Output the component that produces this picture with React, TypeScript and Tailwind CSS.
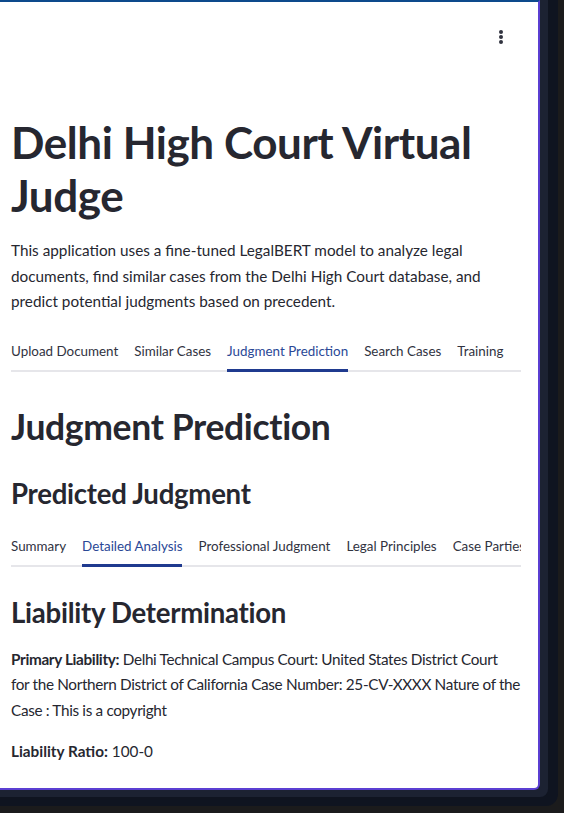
import React from "react";

const TOP_TABS = ["Upload Document", "Similar Cases", "Judgment Prediction", "Search Cases", "Training"];
const SUB_TABS = ["Summary", "Detailed Analysis", "Professional Judgment", "Legal Principles", "Case Parties"];

function Tabs({ items, active }: { items: string[]; active: string }) {
  return (
    <div className="relative flex gap-4 overflow-hidden whitespace-nowrap">
      <div className="absolute inset-x-0 bottom-0 h-[2px] bg-[#e6e6ea]" />
      {items.map((t) => (
        <div
          key={t}
          className={
            "relative pb-[11px] pt-1 text-[13.4px] leading-[20px] " +
            (t === active ? "text-[#2a4896]" : "text-[#31333f]")
          }
        >
          {t}
          {t === active && <div className="absolute inset-x-0 bottom-0 h-[3px] bg-[#1f3a8f]" />}
        </div>
      ))}
    </div>
  );
}

export default function App() {
  return (
    <div className="h-[813px] w-full overflow-hidden bg-[#1b1b1c] font-['Lato','Liberation_Sans',sans-serif]">
      <div className="h-[806px] w-[558px] rounded-br-xl bg-[#0f1420]">
        <div className="h-[797px] w-[548px] rounded-br-lg bg-[#1c2232]">
          <div className="relative h-[790px] w-[540px] overflow-hidden rounded-br-md border-b-2 border-r-2 border-t-2 border-b-[#5b3fd2] border-r-[#5b3fd2] border-t-[#0d4a8c] bg-white text-[#262730]">
            <button className="absolute right-[28px] top-[21px] p-1 text-[#31333f]">
              <svg width="10" height="20" viewBox="0 0 10 20" fill="currentColor">
                <circle cx="5" cy="5" r="2" />
                <circle cx="5" cy="10" r="2" />
                <circle cx="5" cy="15" r="2" />
              </svg>
            </button>

            <div className="ml-[11px] w-[510px] pt-[114px]">
              <h1 className="text-[44px] font-bold leading-[53px] tracking-[-0.01em]">
                Delhi High Court Virtual Judge
              </h1>
              <p className="mt-[16px] text-[15.3px] leading-[25.6px]">
                This application uses a fine-tuned LegalBERT model to analyze legal documents, find similar cases
                from the Delhi High Court database, and predict potential judgments based on precedent.
              </p>

              <div className="mt-[22px]">
                <Tabs items={TOP_TABS} active="Judgment Prediction" />
              </div>

              <h2 className="mt-[33px] text-[35.5px] font-bold leading-[44px] tracking-[-0.01em]">
                Judgment Prediction
              </h2>
              <h3 className="mt-[27px] text-[27.6px] font-bold leading-[36px] tracking-[-0.01em]">
                Predicted Judgment
              </h3>

              <div className="mt-[20px]">
                <Tabs items={SUB_TABS} active="Detailed Analysis" />
              </div>

              <h3 className="mt-[28px] text-[27.6px] font-bold leading-[36px] tracking-[-0.01em]">
                Liability Determination
              </h3>
              <p className="mt-[16px] whitespace-nowrap text-[15.3px] leading-[25.6px] tracking-[-0.022em]">
                <strong className="font-bold">Primary Liability:</strong> Delhi Technical Campus Court: United States
                District Court
                <br />
                for the Northern District of California Case Number: 25-CV-XXXX Nature of the
                <br />
                Case : This is a copyright
              </p>
              <p className="mt-[15px] text-[15.3px] leading-[25.6px]">
                <strong className="font-bold">Liability Ratio:</strong> 100-0
              </p>
            </div>
          </div>
        </div>
      </div>
    </div>
  );
}
